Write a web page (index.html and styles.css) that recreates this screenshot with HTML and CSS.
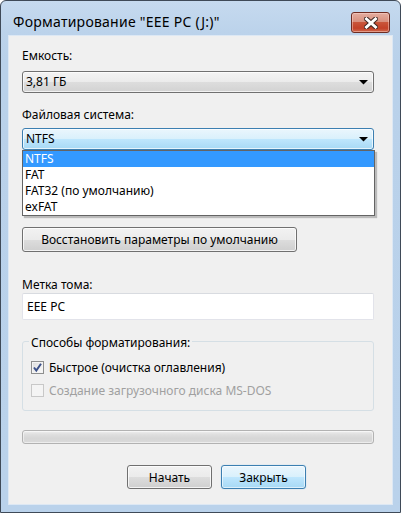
FILE: index.html
```html
<!DOCTYPE html>
<html lang="ru">
<head>
<meta charset="utf-8">
<title>Форматирование</title>
<link rel="stylesheet" href="styles.css">
</head>
<body>
<div class="window">
  <div class="titlebar">
    <span class="title">Форматирование "EEE PC (J:)"</span>
    <div class="close">
      <svg width="14" height="12" viewBox="0 0 14 12">
        <path d="M2.5 2 L11.5 10 M11.5 2 L2.5 10" stroke="#3d2520" stroke-width="5" stroke-linecap="square" fill="none"/>
        <path d="M2.5 2 L11.5 10 M11.5 2 L2.5 10" stroke="#ffffff" stroke-width="3" stroke-linecap="square" fill="none"/>
      </svg>
    </div>
  </div>
  <div class="content">
    <div class="label first">Емкость:</div>
    <div class="combo">
      <span>3,81 ГБ</span>
      <svg class="arrow" width="9" height="5" viewBox="0 0 9 5"><path d="M0 0H9L4.5 4.5Z" fill="#000"/></svg>
    </div>
    <div class="label">Файловая система:</div>
    <div class="combo-wrap">
      <div class="combo active">
        <span>NTFS</span>
        <svg class="arrow" width="9" height="5" viewBox="0 0 9 5"><path d="M0 0H9L4.5 4.5Z" fill="#000"/></svg>
      </div>
      <ul class="list">
        <li class="selected">NTFS</li>
        <li>FAT</li>
        <li>FAT32 (по умолчанию)</li>
        <li>exFAT</li>
      </ul>
    </div>
    <button class="btn restore">Восстановить параметры по умолчанию</button>
    <div class="label label3">Метка тома:</div>
    <div class="textbox">EEE PC</div>
    <fieldset class="group">
      <legend>Способы форматирования:</legend>
      <div class="check">
        <span class="box">
          <svg width="11" height="11" viewBox="0 0 11 11"><path d="M2 5.5 L4.3 8.5 L9 1.8" stroke="#3c5189" stroke-width="2" fill="none"/></svg>
        </span>
        <span>Быстрое (очистка оглавления)</span>
      </div>
      <div class="check disabled">
        <span class="box"></span>
        <span>Создание загрузочного диска MS-DOS</span>
      </div>
    </fieldset>
    <div class="progress"></div>
    <div class="buttons">
      <button class="btn action">Начать</button>
      <button class="btn action default">Закрыть</button>
    </div>
  </div>
</div>
</body>
</html>
```

FILE: styles.css
```css
html, body {
  margin: 0;
  padding: 0;
  background: #ffffff;
}

.window {
  width: 401px;
  height: 513px;
  box-sizing: border-box;
  border: 1px solid #3f4a58;
  border-radius: 6px 6px 0 0;
  background: linear-gradient(180deg, #c6daef 0px, #bcd3eb 30px, #b9d1ea 60px, #bad2eb 100%);
  padding: 0 7px 7px 7px;
  display: flex;
  flex-direction: column;
  font-family: "Noto Sans", "Open Sans", sans-serif;
  font-size: 12px;
  color: #000;
}

.titlebar {
  height: 34px;
  flex: none;
  display: flex;
  align-items: flex-start;
}

.title {
  margin: 13px 0 0 5px;
  font-size: 14px;
  letter-spacing: 0.25px;
  line-height: 16px;
  color: #000;
}

.close {
  margin: 11px 3px 0 auto;
  width: 37px;
  height: 19px;
  border: 1px solid #6e2c22;
  border-radius: 3px;
  background: linear-gradient(180deg, #e4ada0 0%, #d8907e 45%, #c9553a 50%, #c34128 80%, #d0694f 100%);
  box-shadow: inset 0 0 0 1px rgba(255, 220, 210, 0.45);
  display: flex;
  align-items: center;
  justify-content: center;
}

.content {
  flex: 1;
  background: #f0f0f0;
  border: 1px solid #dde8f4;
  padding: 0 18px 0 13px;
  display: flex;
  flex-direction: column;
}

.label {
  line-height: 16px;
  margin-top: 14px;
}

.label.first {
  margin-top: 12px;
}

.label.label3 {
  margin-top: 25px;
}

.combo {
  margin-top: 7px;
  height: 22px;
  box-sizing: border-box;
  width: 352px;
  border: 1px solid #707070;
  border-radius: 3px;
  background: linear-gradient(180deg, #f3f3f3 0%, #ebebeb 50%, #dddddd 51%, #d2d2d2 100%);
  box-shadow: inset 0 0 0 1px rgba(255, 255, 255, 0.7);
  display: flex;
  align-items: center;
  padding: 0 5px 0 3px;
  line-height: 16px;
}

.combo .arrow {
  margin-left: auto;
}

.combo-wrap {
  position: relative;
  margin-top: 5px;
  width: 352px;
}

.combo.active {
  margin-top: 0;
  border-color: #3c7fb1;
  background: linear-gradient(180deg, #eaf6fd 0%, #d9f0fc 50%, #bee6fd 51%, #a7d9f5 100%);
}

.list {
  position: absolute;
  left: 0;
  top: 100%;
  margin: 0;
  padding: 0;
  list-style: none;
  width: 353px;
  box-sizing: border-box;
  border: 1px solid #646464;
  background: #ffffff;
  box-shadow: 2px 2px 1px rgba(0, 0, 0, 0.22);
  z-index: 2;
}

.list li {
  height: 16px;
  line-height: 16px;
  padding-left: 2px;
}

.list li.selected {
  background: #3399ff;
  color: #ffffff;
}

.btn {
  font-family: inherit;
  font-size: 12px;
  color: #000;
  border: 1px solid #707070;
  border-radius: 3px;
  background: linear-gradient(180deg, #f2f2f2 0%, #ebebeb 50%, #dddddd 51%, #cfcfcf 100%);
  box-shadow: inset 0 0 0 1px rgba(255, 255, 255, 0.75);
  padding: 0;
  margin: 0;
}

.restore {
  margin-top: 77px;
  width: 275px;
  height: 25px;
  align-self: flex-start;
}

.textbox {
  margin-top: 0;
  width: 352px;
  height: 27px;
  box-sizing: border-box;
  background: #ffffff;
  border: 1px solid #e2e3ea;
  border-top-color: #d8dbe0;
  border-radius: 2px;
  padding: 0 4px;
  display: flex;
  align-items: center;
}

.group {
  margin: 11px 0 0 0;
  width: 352px;
  box-sizing: border-box;
  border: 1px solid #d5dfe5;
  border-radius: 3px;
  padding: 8px 8px 11px 8px;
  min-inline-size: 0;
}

.group legend {
  padding: 4px 2px 0 2px;
  margin-left: -2px;
  line-height: 16px;
}

.check {
  height: 17px;
  display: flex;
  align-items: center;
  line-height: 16px;
}

.check + .check {
  margin-top: 6px;
}

.box {
  width: 13px;
  height: 13px;
  box-sizing: border-box;
  border: 1px solid #8e8f8f;
  background: linear-gradient(135deg, #dcdcdc 0%, #f0f0f0 60%, #fbfbfb 100%);
  box-shadow: inset 0 0 0 1px #f4f4f4;
  margin-right: 5px;
  display: flex;
  align-items: center;
  justify-content: center;
  flex: none;
}

.check.disabled {
  color: #a0a0a0;
}

.check.disabled .box {
  border-color: #c8c8c8;
  background: #f4f4f4;
  box-shadow: none;
}

.progress {
  margin-top: 19px;
  width: 352px;
  height: 14px;
  box-sizing: border-box;
  border: 1px solid #b2b2b2;
  border-radius: 3px;
  background: linear-gradient(180deg, #f0f0f0 0%, #e0e0e0 25%, #d6d6d6 60%, #dadada 100%);
  box-shadow: inset 0 0 0 1px rgba(255, 255, 255, 0.5);
}

.buttons {
  margin-top: 21px;
  display: flex;
  gap: 9px;
  padding-left: 105px;
}

.action {
  width: 85px;
  height: 24px;
}

.action.default {
  border-color: #3c7fb1;
  background: linear-gradient(180deg, #eaf6fd 0%, #d9f0fc 50%, #bee6fd 51%, #a7d9f5 100%);
  box-shadow: inset 0 0 0 1px rgba(255, 255, 255, 0.6), 0 0 1px #7fc4ee;
}
```
